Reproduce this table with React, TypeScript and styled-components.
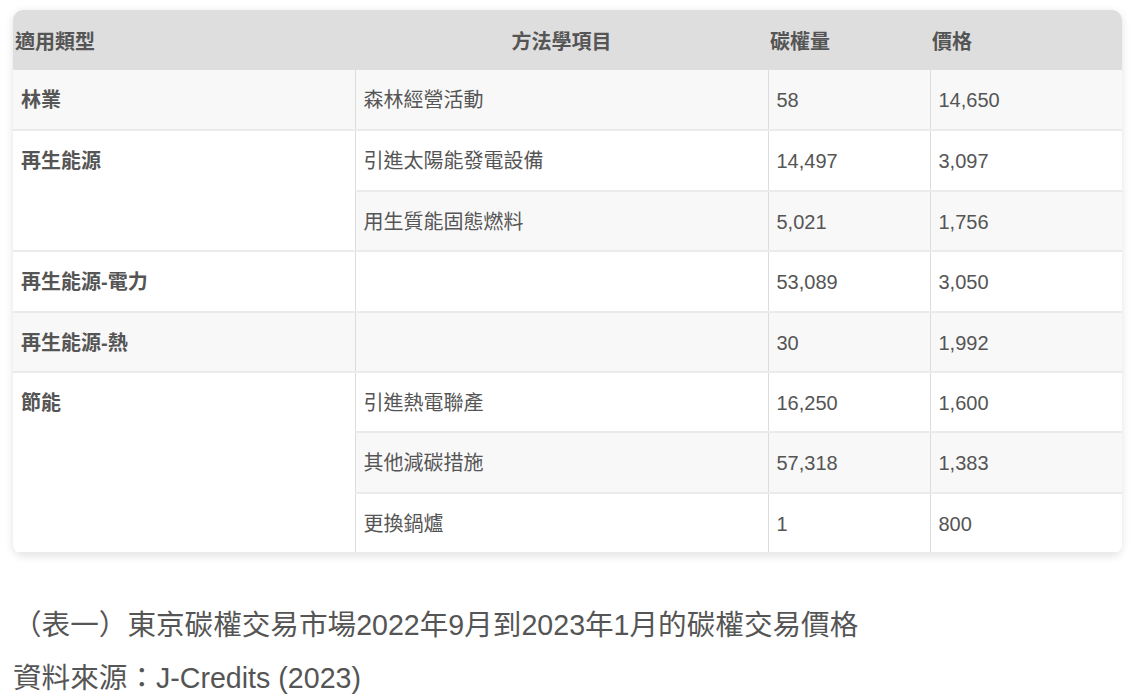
import React from "react";
import styled, { createGlobalStyle } from "styled-components";

const Global = createGlobalStyle`
  html, body { margin: 0; padding: 0; background: #ffffff; }
  body { font-family: "Liberation Sans", "Noto Sans CJK TC", sans-serif; color: #555; }
`;

const Page = styled.div`
  padding: 10px 16px 0 13px;
`;

const Card = styled.div`
  border-radius: 10px;
  overflow: hidden;
  box-shadow: 0 2px 8px rgba(0, 0, 0, 0.12);
  background: #fff;
`;

const Table = styled.table`
  width: 100%;
  border-collapse: collapse;
  table-layout: fixed;
  font-size: 20px;
  color: #555;
`;

const HeadCell = styled.th<{ $center?: boolean }>`
  background: #dedede;
  height: 60px;
  padding: 0 2px;
  font-weight: 700;
  text-align: ${(p) => (p.$center ? "center" : "left")};
  color: #555;
  vertical-align: middle;
`;

const Row = styled.tr`
  &:nth-child(odd) td { background: #f8f8f8; }
  &:nth-child(even) td { background: #ffffff; }
`;

const Cell = styled.td<{ $bold?: boolean }>`
  height: 60.4px;
  box-sizing: border-box;
  padding: 18px 8px 0;
  vertical-align: top;
  border-bottom: 2px solid #ebebeb;
  border-right: 1px solid #dcdcdc;
  font-weight: ${(p) => (p.$bold ? 700 : 400)};
  line-height: 24px;
  &:last-child { border-right: none; }
`;

const Caption = styled.div`
  margin-top: 45px;
  font-size: 28.6px;
  line-height: 53px;
  color: #555;
`;

type R = { cat?: string; span?: number; method: string; amount: string; price: string };

const rows: R[] = [
  { cat: "林業", span: 1, method: "森林經營活動", amount: "58", price: "14,650" },
  { cat: "再生能源", span: 2, method: "引進太陽能發電設備", amount: "14,497", price: "3,097" },
  { method: "用生質能固態燃料", amount: "5,021", price: "1,756" },
  { cat: "再生能源-電力", span: 1, method: "", amount: "53,089", price: "3,050" },
  { cat: "再生能源-熱", span: 1, method: "", amount: "30", price: "1,992" },
  { cat: "節能", span: 3, method: "引進熱電聯產", amount: "16,250", price: "1,600" },
  { method: "其他減碳措施", amount: "57,318", price: "1,383" },
  { method: "更換鍋爐", amount: "1", price: "800" },
];

export default function App() {
  return (
    <Page>
      <Global />
      <Card>
        <Table>
          <colgroup>
            <col style={{ width: 342 }} />
            <col style={{ width: 413 }} />
            <col style={{ width: 162 }} />
            <col />
          </colgroup>
          <thead>
            <tr>
              <HeadCell>適用類型</HeadCell>
              <HeadCell $center>方法學項目</HeadCell>
              <HeadCell>碳權量</HeadCell>
              <HeadCell>價格</HeadCell>
            </tr>
          </thead>
          <tbody>
            {rows.map((r, i) => (
              <Row key={i}>
                {r.cat !== undefined && (
                  <Cell $bold rowSpan={r.span}>
                    {r.cat}
                  </Cell>
                )}
                <Cell>{r.method}</Cell>
                <Cell>{r.amount}</Cell>
                <Cell>{r.price}</Cell>
              </Row>
            ))}
          </tbody>
        </Table>
      </Card>
      <Caption>
        <div>（表一）東京碳權交易市場2022年9月到2023年1月的碳權交易價格</div>
        <div>資料來源：J-Credits (2023)</div>
      </Caption>
    </Page>
  );
}
